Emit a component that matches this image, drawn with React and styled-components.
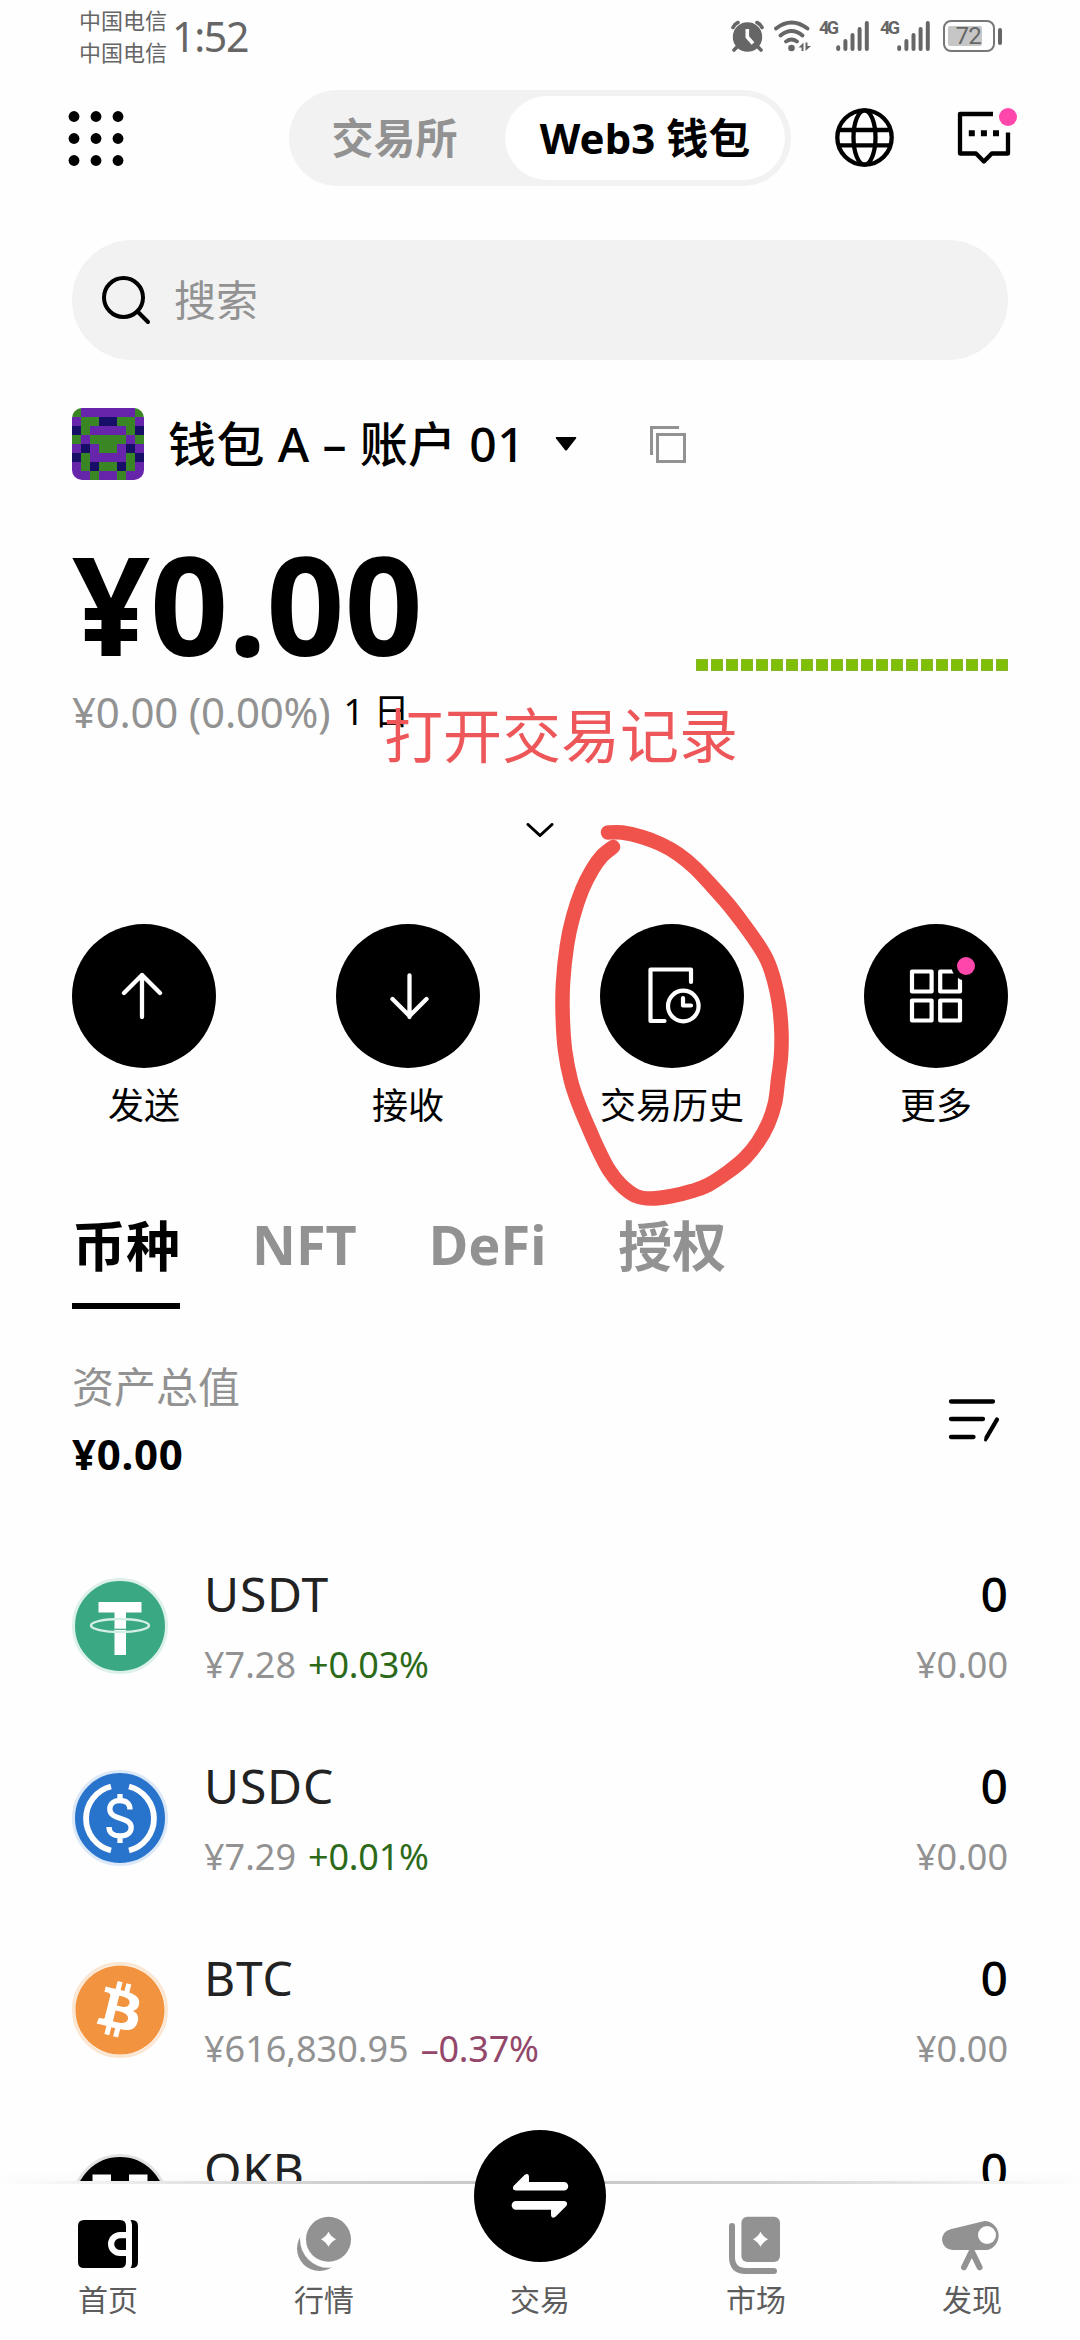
import React, { useState } from 'react';
import styled, { createGlobalStyle } from 'styled-components';
import { FaBitcoin } from 'react-icons/fa';

const GlobalStyle = createGlobalStyle`
  * {
    box-sizing: border-box;
  }

  body {
    margin: 0;
    background-color: #fefefe;
    font-family: 'Noto Sans', 'Noto Sans CJK SC', sans-serif;
    color: #000;
  }

  button {
    padding: 0;
    border: none;
    background: none;
    font: inherit;
    color: inherit;
  }

  svg {
    display: block;
    flex-shrink: 0;
  }
`;

const Page = styled.div`
  position: relative;
  width: 1080px;
  height: 2340px;
  display: flex;
  flex-direction: column;
  overflow: hidden;
`;

const StatusBar = styled.div`
  height: 90px;
  padding: 4px 78px 0 79px;
  display: flex;
  justify-content: space-between;
  color: #666;

  .left {
    display: flex;
    gap: 5px;
  }

  .carrier {
    font-size: 22px;
    line-height: 32px;
    width: 88px;
    white-space: nowrap;
  }

  .time {
    font-size: 41px;
    line-height: 65px;
    letter-spacing: -1.3px;
  }

  .icons {
    height: 64px;
    display: flex;
    align-items: center;
  }
`;

const StatusIcon = styled.svg`
  margin-right: ${props => props.$gap || 0}px;
`;

const NetLabel = styled.span`
  width: 17px;
  height: 30px;
  font-family: 'Roboto', sans-serif;
  font-size: 18px;
  font-weight: 700;
  line-height: 14px;
  letter-spacing: -2.6px;
`;

const Battery = styled.div`
  display: flex;
  align-items: center;
  gap: 3px;

  .body {
    width: 52px;
    height: 32px;
    padding: 3.5px 2.5px;
    border: 2.5px solid #777;
    border-radius: 8px;
  }

  .level {
    width: 34px;
    height: 20px;
    padding-left: 8px;
    background-color: #c6c6c6;
    border-radius: 2px;
    font-family: 'Roboto', sans-serif;
    font-size: 24px;
    line-height: 21px;
    letter-spacing: -0.8px;
  }

  .tip {
    width: 4px;
    height: 17px;
    border-radius: 2px;
    background-color: #666;
  }
`;

const Header = styled.div`
  height: 96px;
  padding: 0 62px 0 68px;
  display: flex;
  align-items: center;

  .chat {
    margin-left: 60px;
  }
`;

const ModeSwitch = styled.div`
  width: 502px;
  height: 96px;
  margin: 0 44px 0 165px;
  padding: 6px;
  display: flex;
  border-radius: 48px;
  background-color: #f2f2f2;
`;

const ModeItem = styled.button`
  width: ${props => (props.$active ? 280 : 210)}px;
  height: 84px;
  padding-right: ${props => (props.$active ? 0 : 11)}px;
  border-radius: 42px;
  background-color: ${props => (props.$active ? '#fff' : 'transparent')};
  color: ${props => (props.$active ? '#000' : '#929292')};
  font-size: 42px;
  font-weight: 700;
  line-height: 84px;
  white-space: nowrap;
`;

const Content = styled.div`
  flex: 1;
  min-height: 0;
  padding: 54px 72px 0;
  overflow: hidden;
`;

const SearchBox = styled.div`
  height: 120px;
  padding-left: 30px;
  display: flex;
  align-items: center;
  gap: 23px;
  border-radius: 60px;
  background-color: #f2f2f2;
  color: #929292;
  font-size: 42px;
  line-height: 42px;
`;

const WalletRow = styled.div`
  height: 72px;
  margin-top: 48px;
  display: flex;
  align-items: center;

  .avatar {
    border-radius: 10px;
  }

  .name {
    margin: 0 33px 0 24px;
    width: 354px;
    font-size: 48px;
    font-weight: 500;
    line-height: 72px;
    letter-spacing: 0.4px;
    white-space: nowrap;
  }

  .copy {
    margin-left: 73px;
  }
`;

const BalanceRow = styled.div`
  height: 136px;
  margin-top: 55px;
  display: flex;
  justify-content: space-between;
  align-items: flex-end;
`;

const Balance = styled.div`
  font-size: 137px;
  font-weight: 700;
  line-height: 136px;
  letter-spacing: -0.3px;
`;

const Sparkline = styled.div`
  display: flex;
  gap: 3px;

  span {
    width: 12px;
    height: 12px;
    background-color: #7fbf06;
    border: 1px solid #86b52c;
  }
`;

const ChangeRow = styled.div`
  height: 42px;
  margin-top: 20px;
  display: flex;
  gap: 13px;
  align-items: center;
  font-size: 42px;
  line-height: 42px;
  color: #929292;
  letter-spacing: -0.25px;

  .period {
    font-size: 36px;
    color: #000;
    letter-spacing: 0;
  }
`;

const Expand = styled.div`
  margin: 90px 0 88px;
  height: 13px;
  display: flex;
  justify-content: center;
`;

const Actions = styled.div`
  display: flex;
  justify-content: space-between;
`;

const Action = styled.div`
  width: 144px;
  display: flex;
  flex-direction: column;
  align-items: center;
  gap: 20px;
  font-size: 36px;
  line-height: 36px;
  white-space: nowrap;

  .round {
    width: 144px;
    height: 144px;
    border-radius: 50%;
    background-color: #000;
  }
`;

const Tabs = styled.div`
  margin-top: 95px;
  display: flex;
  align-items: flex-start;
  gap: 72px;
`;

const Tab = styled.button`
  height: 90px;
  padding-bottom: ${props => (props.$latin ? 34 : 30)}px;
  border-bottom: 6px solid ${props => (props.$active ? '#000' : 'transparent')};
  color: ${props => (props.$active ? '#000' : '#929292')};
  font-size: 54px;
  font-weight: 700;
  line-height: ${props => (props.$latin ? 50 : 54)}px;
`;

const Summary = styled.div`
  margin-top: 57px;
  padding-right: 8px;
  display: flex;
  justify-content: space-between;
  align-items: center;

  .label {
    font-size: 42px;
    line-height: 42px;
    color: #929292;
  }

  .total {
    margin-top: 25px;
    font-size: 42px;
    font-weight: 700;
    line-height: 42px;
    letter-spacing: 0.7px;
  }
`;

const CoinList = styled.div`
  margin-top: 95px;
  display: flex;
  flex-direction: column;
  gap: 79px;
`;

const CoinRow = styled.div`
  height: 113px;
  display: flex;
  align-items: center;

  .info {
    flex: 1;
    margin-left: 36px;
  }

  .name {
    margin-bottom: 29px;
    font-size: 48px;
    line-height: 48px;
    letter-spacing: 0.8px;
    color: #222;
  }

  .price {
    height: 36px;
    display: flex;
    gap: 12px;
    font-size: 36px;
    line-height: 36px;
    color: #929292;
  }

  .amount {
    text-align: right;
  }

  .amount .name {
    color: #000;
    font-weight: 500;
    letter-spacing: 0;
  }

  .amount .price {
    justify-content: flex-end;
  }
`;

const CoinIcon = styled.div`
  width: 96px;
  height: 96px;
  margin-bottom: 2px;
  display: flex;
  justify-content: center;
  align-items: center;
  border: 3px solid ${props => props.$ring};
  border-radius: 50%;
  background-color: ${props => props.$bg};
`;

const Change = styled.span`
  color: ${props => (props.$down ? '#93476a' : '#2c6a1a')};
  letter-spacing: -0.2px;
`;

const NavBar = styled.div`
  height: 159px;
  display: flex;
  flex-shrink: 0;
  border-top: 3px solid;
  border-image: linear-gradient(to right, #fefefe, #d0d0d0 30%, #c6c6c6 50%, #d0d0d0 70%, #fefefe) 1;
  background-color: #fefefe;
  box-shadow: 0 -2px 14px rgba(0, 0, 0, 0.025);
`;

const NavItem = styled.div`
  width: 216px;
  padding-top: 30px;
  display: flex;
  flex-direction: column;
  align-items: center;
  font-size: 30px;
  line-height: 30px;
  color: #5c5c5c;

  svg {
    margin-bottom: 9px;
  }

  .swap {
    margin-top: -84px;
    margin-bottom: 23px;
  }
`;

// 화면 위에 그려진 빨간색 표시 영역
const MarkText = styled.div`
  position: absolute;
  left: 384px;
  top: 705px;
  font-size: 59px;
  line-height: 60px;
  color: #ee575a;
  white-space: nowrap;
`;

const MarkCircle = styled.svg`
  position: absolute;
  left: 540px;
  top: 810px;
`;

const avatarRows = [
  'GPPPPPPG',
  'PGGNNGGP',
  'NGPPPPGN',
  'GPGGGGPG',
  'PNPGGPNP',
  'NGPPPPGN',
  'PGNGGNGP',
  'PPGPPGPP',
];

const avatarColors = { G: '#3a8624', P: '#6625aa', N: '#170e68' };

const coins = [
  { name: 'USDT', price: '¥7.28', change: '+0.03%', value: '¥0.00', bg: '#3aa882', ring: '#dcf1ea' },
  { name: 'USDC', price: '¥7.29', change: '+0.01%', value: '¥0.00', bg: '#2873cb', ring: '#dbe8f7' },
  { name: 'BTC', price: '¥616,830.95', change: '–0.37%', value: '¥0.00', down: true, bg: '#fff', ring: '#fbe6d2' },
  { name: 'OKB', bg: '#000', ring: '#e2e2e2' },
];

const tabs = [
  { name: '币种' },
  { name: 'NFT', latin: true },
  { name: 'DeFi', latin: true },
  { name: '授权' },
];

const penPoints = [
  [608, 832.5], [622, 832.5], [642, 837], [660.5, 844], [678, 854], [695, 868],
  [712, 886], [728, 904], [742, 922], [757, 943], [767, 960], [774, 980],
  [779, 1004], [781.4, 1031], [781, 1056], [778, 1080], [775, 1103], [768, 1124],
  [758, 1142], [745, 1158], [728, 1172], [708, 1185], [692, 1191], [672, 1196],
  [651, 1198.5], [636, 1196], [621, 1185], [609, 1170], [599, 1151], [590, 1131],
  [579, 1105], [571, 1081], [565, 1050], [562.7, 1016], [563, 983], [567, 945],
  [573, 917], [582, 890], [592, 870], [602, 856], [613, 847],
];

// 좌표들을 부드러운 곡선으로 이어줌
const smoothPath = points => {
  let d = `M${points[0][0]} ${points[0][1]}`;
  for (let i = 0; i < points.length - 1; i++) {
    const p0 = points[i - 1] || points[i];
    const p1 = points[i];
    const p2 = points[i + 1];
    const p3 = points[i + 2] || p2;
    d += ` C${p1[0] + (p2[0] - p0[0]) / 6} ${p1[1] + (p2[1] - p0[1]) / 6}`;
    d += ` ${p2[0] - (p3[0] - p1[0]) / 6} ${p2[1] - (p3[1] - p1[1]) / 6}`;
    d += ` ${p2[0]} ${p2[1]}`;
  }
  return d;
};

function Signal({ gap }) {
  return (
    <StatusIcon $gap={gap} width='33' height='30' viewBox='0 0 33 30' stroke='#666' strokeWidth='4' strokeLinecap='round'>
      <path d='M2.2 26.2v1.8M9.4 20v8M16.5 14v14M23.6 8v20M30.8 2v26' />
    </StatusIcon>
  );
}

function CoinLogo({ name }) {
  if (name === 'USDT') {
    return (
      <svg width='90' height='90' viewBox='0 0 90 90'>
        <path d='M23.5 21h43v10.5H51V74H39.5V31.5h-16z' fill='#fff' />
        <ellipse cx='45' cy='44.5' rx='29' ry='6.5' fill='none' stroke='#d6efe6' strokeWidth='2.4' />
        <path d='M39.5 48.3h11.5' stroke='#3aa882' strokeWidth='1.2' />
      </svg>
    );
  }
  if (name === 'USDC') {
    return (
      <svg width='90' height='90' viewBox='0 0 90 90' fill='none' stroke='#fff' strokeWidth='5.8'>
        <path d='M36 13.5A33 33 0 0 0 36 77.500M54 13.5A33 33 0 0 1 54 77.500' />
        <path d='M55 36.500c0-6-4-9-10-9S34.800 31 34.800 36c0 12 21.400 7 21.400 18.500C56.200 60 51.500 63 45 63c-7 0-11-3.500-11-9M45 21v6M45 63v7' strokeWidth='5.300' />
      </svg>
    );
  }
  if (name === 'BTC') {
    return <FaBitcoin size={92} color='#f29340' />;
  }
  return (
    <svg width='90' height='90' viewBox='0 0 90 90' fill='#fff'>
      <path d='M17.5 17.5h18.500v18.500h-18.500zM54 17.5h18.500v18.500H54zM36 36h18v18H36zM17.5 54h18.500v18.500h-18.500zM54 54h18.500v18.500H54z' />
    </svg>
  );
}

function App() {
  const [mode, setMode] = useState('wallet');
  const [tab, setTab] = useState('币种');

  return (
    <Page>
      <GlobalStyle />
      <StatusBar>
        <div className='left'>
          <div className='carrier'>
            中国电信
            <br />
            中国电信
          </div>
          <div className='time'>1:52</div>
        </div>
        <div className='icons'>
          <StatusIcon $gap={10} width='33' height='32' viewBox='0 0 33 32'>
            <circle cx='16.5' cy='17' r='14.7' fill='#666' />
            <path d='M2 7.5Q3.5 4 7 2.5M31 7.5Q29.5 4 26 2.5M6 27l-3 3M27 27l3 3' stroke='#666' strokeWidth='3.6' strokeLinecap='round' fill='none' />
            <path d='M16.3 9v8l5.7 6.5' stroke='#fefefe' strokeWidth='3.6' fill='none' />
          </StatusIcon>
          <StatusIcon $gap={7} width='38' height='32' viewBox='0 0 38 32'>
            <path d='M2 8.5Q17.5-3.5 33.5 8.5M6.500 15.5Q17.5 6.5 28.5 15.5M12 21.5Q17.5 17.5 23 21.5' stroke='#666' strokeWidth='3.8' strokeLinecap='round' fill='none' />
            <circle cx='17.5' cy='28' r='3.3' fill='#666' />
            <path d='M24.5 27.5l5-5v8.500h-2v-3.500zM31.5 31v-8.500h2v3.500h3.500z' fill='#666' />
          </StatusIcon>
          <NetLabel>4G</NetLabel>
          <Signal gap={11} />
          <NetLabel>4G</NetLabel>
          <Signal gap={13} />
          <Battery>
            <div className='body'>
              <div className='level'>72</div>
            </div>
            <div className='tip' />
          </Battery>
        </div>
      </StatusBar>

      <Header>
        <svg width='56' height='56' viewBox='0 0 56 56'>
          {[7, 29, 51].map(y => [6, 28, 50].map(x => <circle key={`${x}-${y}`} cx={x} cy={y - 0.5} r='5.4' />))}
        </svg>
        <ModeSwitch>
          <ModeItem $active={mode === 'exchange'} onClick={() => setMode('exchange')}>
            交易所
          </ModeItem>
          <ModeItem $active={mode === 'wallet'} onClick={() => setMode('wallet')}>
            Web3 钱包
          </ModeItem>
        </ModeSwitch>
        <svg width='59' height='60' viewBox='0 0 59 60' fill='none' stroke='#000' strokeWidth='4.3'>
          <circle cx='29.5' cy='29.5' r='27.2' />
          <ellipse cx='29.5' cy='29.5' rx='11' ry='27.2' />
          <path d='M4 22h51M4 37.3h51' />
        </svg>
        <svg className='chat' width='64' height='60' viewBox='954 108 64 60'>
          <path d='M993 114H960v39.5h16l7.9 8 7.9-8H1008V132.5' fill='none' stroke='#000' strokeWidth='4.3' strokeLinejoin='round' />
          <path d='M968.8 130.3h6v6h-6zM980.9 130.3h6v6h-6zM993 130.3h6v6h-6z' />
          <circle cx='1008' cy='117' r='9' fill='#ff46ab' />
        </svg>
      </Header>

      <Content>
        <SearchBox>
          <svg width='49' height='50' viewBox='0 0 49 50' fill='none' stroke='#000' strokeWidth='4' strokeLinecap='round'>
            <circle cx='21.5' cy='22.5' r='19.5' />
            <path d='M35.5 36.5l10.5 10.5' />
          </svg>
          搜索
        </SearchBox>

        <WalletRow>
          <svg className='avatar' width='72' height='72' viewBox='0 0 8 8' shapeRendering='crispEdges'>
            {avatarRows.map((row, y) =>
              row.split('').map((cell, x) => (
                <rect key={`${x}-${y}`} x={x} y={y} width='1' height='1' fill={avatarColors[cell]} />
              ))
            )}
          </svg>
          <div className='name'>钱包 A – 账户 01</div>
          <svg width='22' height='14' viewBox='0 0 22 14'>
            <path d='M1.5 0h19q1.5 0 .5 1.5l-9 11.5q-1 1-2 0l-9-11.5q-1-1.5.5-1.5z' />
          </svg>
          <svg className='copy' width='36' height='37' viewBox='0 0 36 37' fill='none' stroke='#929292' strokeWidth='3'>
            <path d='M1.5 29V1.5H29M7.5 8.5h27v27h-27z' />
          </svg>
        </WalletRow>

        <BalanceRow>
          <Balance>¥0.00</Balance>
          <Sparkline>
            {Array.from({ length: 21 }, (_, i) => (
              <span key={i} />
            ))}
          </Sparkline>
        </BalanceRow>
        <ChangeRow>
          ¥0.00 (0.00%)
          <span className='period'>1 日</span>
        </ChangeRow>

        <Expand>
          <svg width='28' height='14' viewBox='0 0 28 14' fill='none' stroke='#000' strokeWidth='3' strokeLinecap='round'>
            <path d='M2 1.5l12 11 12-11' />
          </svg>
        </Expand>

        <Actions>
          <Action>
            <svg className='round' viewBox='72 924 144 144' fill='none' stroke='#fff' strokeWidth='4.3' strokeLinecap='round' strokeLinejoin='round'>
              <path d='M142 1017v-42M124 993l18-18 18 18' />
            </svg>
            发送
          </Action>
          <Action>
            <svg className='round' viewBox='336 924 144 144' fill='none' stroke='#fff' strokeWidth='4.3' strokeLinecap='round' strokeLinejoin='round'>
              <path d='M409.5 975.5v41.5M392.5 999l17 17 17-17' />
            </svg>
            接收
          </Action>
          <Action>
            <svg className='round' viewBox='600 924 144 144' fill='none' stroke='#fff' strokeWidth='4.2' strokeLinecap='round' strokeLinejoin='round'>
              <path d='M691 982v-12.5h-40.5v51.5h14' />
              <circle cx='683.3' cy='1006' r='15.3' />
              <path d='M683 998v7.5h8' />
            </svg>
            交易历史
          </Action>
          <Action>
            <svg className='round' viewBox='864 924 144 144' fill='none' stroke='#fff' strokeWidth='4.2' strokeLinejoin='round'>
              <path d='M912 971.5h19.6v20H912zM940.2 971.5H960v20h-19.8zM912 1000.5h19.6v20H912zM940.2 1000.5H960v20h-19.8z' />
              <circle cx='966' cy='966' r='14.5' fill='#000' stroke='none' />
              <circle cx='966' cy='966' r='9' fill='#ff46ab' stroke='none' />
            </svg>
            更多
          </Action>
        </Actions>

        <Tabs>
          {tabs.map(({ name, latin }) => (
            <Tab key={name} $latin={latin} $active={tab === name} onClick={() => setTab(name)}>
              {name}
            </Tab>
          ))}
        </Tabs>

        <Summary>
          <div>
            <div className='label'>资产总值</div>
            <div className='total'>¥0.00</div>
          </div>
          <svg width='52' height='44' viewBox='948 1399 52 44' fill='none' stroke='#000' strokeWidth='4.3' strokeLinecap='round'>
            <path d='M951 1401.500h42M951 1419h32M951 1437h22.5M997 1419.5l-10.5 18' />
            <path d='M987 1437l-1.5 3' strokeWidth='3' />
          </svg>
        </Summary>

        <CoinList>
          {coins.map(coin => (
            <CoinRow key={coin.name}>
              <CoinIcon $bg={coin.bg} $ring={coin.ring}>
                <CoinLogo name={coin.name} />
              </CoinIcon>
              <div className='info'>
                <div className='name'>{coin.name}</div>
                <div className='price'>
                  {coin.price}
                  {coin.change && <Change $down={coin.down}>{coin.change}</Change>}
                </div>
              </div>
              <div className='amount'>
                <div className='name'>0</div>
                <div className='price'>{coin.value}</div>
              </div>
            </CoinRow>
          ))}
        </CoinList>
      </Content>

      <NavBar>
        <NavItem>
          <svg width='62' height='62' viewBox='77 2214 62 62'>
            <path d='M84 2220h36q6 0 6 6v6h-6a12 12 0 0 0 0 24h6v6q0 6-6 6H84q-6 0-6-6v-36q0-6 6-6z' />
            <path d='M126 2238.3v11.7h-6a5.850 5.850 0 0 1 0-11.7zM130.5 2220h1.5q6 0 6 6v36q0 6-6 6h-1.5q1.5-2 1.5-5v-38q0-3-1.5-5z' />
          </svg>
          首页
        </NavItem>
        <NavItem>
          <svg width='62' height='62' viewBox='293 2214 62 62'>
            <circle cx='319.5' cy='2248.5' r='22.5' fill='#929292' />
            <circle cx='328.5' cy='2239.3' r='28.5' fill='#fefefe' />
            <circle cx='328.5' cy='2239.3' r='22.5' fill='#929292' />
            <path d='M328.5 2231.8q2.5 5 7.5 7.5-5 2.5-7.5 7.5-2.5-5-7.5-7.5 5-2.5 7.5-7.5z' fill='#fff' />
          </svg>
          行情
        </NavItem>
        <NavItem>
          <svg className='swap' width='132' height='132' viewBox='474 2130 132 132'>
            <circle cx='540' cy='2196' r='66' />
            <path
              d='M516 2190.5h48a4.2 4.2 0 0 0 0-8.5h-35v-5.5q-.5-4-4.5-1.5l-11 11q-2 4 2.5 4.5zM564 2201h-48a4.3 4.3 0 0 0 0 8.7h35v5.5q.5 4 4.5 1.5l11-11q2-4-2.5-4.7z'
              fill='#fff'
            />
          </svg>
          交易
        </NavItem>
        <NavItem>
          <svg width='62' height='62' viewBox='725 2214 62 62' fill='#929292'>
            <rect x='741.4' y='2216.7' width='38.6' height='45.3' rx='6' />
            <path d='M732 2226v31q0 14 14 14h28' fill='none' stroke='#929292' strokeWidth='6' strokeLinecap='round' />
            <path d='M760.5 2231.8q2.5 5 7.5 7.5-5 2.5-7.5 7.5-2.5-5-7.5-7.5 5-2.5 7.5-7.5z' fill='#fff' />
          </svg>
          市场
        </NavItem>
        <NavItem>
          <svg width='62' height='62' viewBox='941 2214 62 62' fill='#929292'>
            <path d='M950.5 2229.2L984.5 2221A14.7 14.7 0 0 1 987.3 2250H952.5A10.5 10.5 0 0 1 950.5 2229.2z' />
            <circle cx='987' cy='2235' r='9' fill='#fff' />
            <path d='M964 2267.3l7.8-16 7.8 16' fill='none' stroke='#929292' strokeWidth='6' strokeLinecap='round' />
          </svg>
          发现
        </NavItem>
      </NavBar>

      <MarkText>打开交易记录</MarkText>
      <MarkCircle width='260' height='410' viewBox='540 810 260 410' fill='none' stroke='#f0534b' strokeWidth='14.5' strokeLinecap='round' strokeLinejoin='round'>
        <path d={smoothPath(penPoints)} />
      </MarkCircle>
    </Page>
  );
}

export default App;
